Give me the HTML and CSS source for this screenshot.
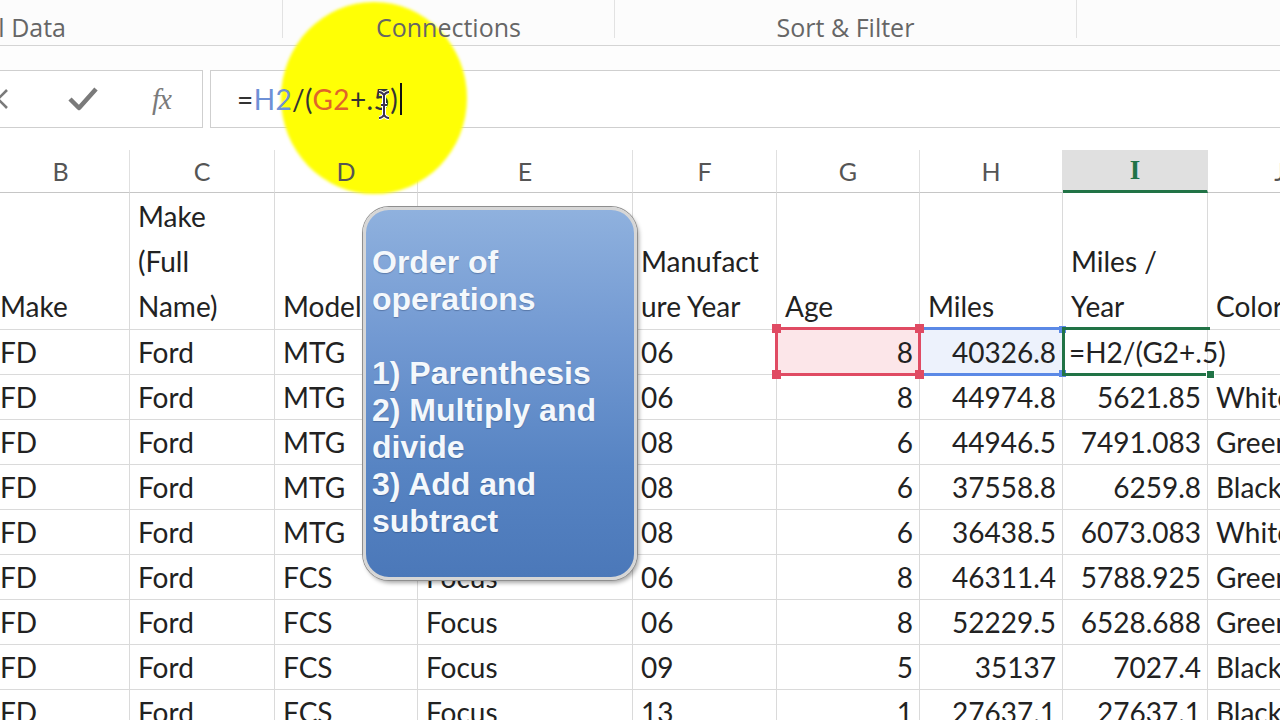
FILE: index.html
```html
<!DOCTYPE html>
<html>
<head>
<meta charset="utf-8">
<link rel="stylesheet" href="styles.css">
</head>
<body>
<div class="ribbon">
  <div class="rgroup g1"><span class="rlabel">Get External Data</span></div>
  <div class="rgroup g2"><span class="rlabel">Connections</span></div>
  <div class="rgroup g3"><span class="rlabel">Sort &amp; Filter</span></div>
  <div class="rgroup g4"></div>
</div>
<div class="band"></div>
<div class="fbar">
  <div class="fbtns">
    <div class="fbtn fbx">
      <svg width="24" height="24" viewBox="0 0 24 24"><path d="M3 3 L21 21 M21 3 L3 21" stroke="#7a7a7a" stroke-width="2.6" fill="none"/></svg>
    </div>
    <div class="fbtn">
      <svg width="32" height="28" viewBox="0 0 32 28"><path d="M3 14 L12 23 L29 4" stroke="#7a7a7a" stroke-width="4.5" fill="none" stroke-linejoin="round"/></svg>
    </div>
    <div class="fbtn"><span class="fx">fx</span></div>
  </div>
  <div class="finput">
    <span class="ftext"><span class="op">=</span><span class="r1">H2</span><span class="op">/(</span><span class="r2">G2</span><span class="op">+.5)</span></span><span class="caret"></span>
  </div>
</div>
<div class="spacer"></div>

<div class="sheet">
  <div class="ch"><span class="cl">B</span></div>
  <div class="ch"><span class="cl">C</span></div>
  <div class="ch"><span class="cl">D</span></div>
  <div class="ch"><span class="cl">E</span></div>
  <div class="ch"><span class="cl">F</span></div>
  <div class="ch"><span class="cl">G</span></div>
  <div class="ch"><span class="cl">H</span></div>
  <div class="ch sel"><span class="cl">I</span></div>
  <div class="ch"><span class="cl">J</span></div>

  <div class="c h"><div>Make</div></div>
  <div class="c h"><div>Make<br>(Full<br>Name)</div></div>
  <div class="c h"><div>Model</div></div>
  <div class="c h"><div>Model<br>Name</div></div>
  <div class="c h"><div>Manufact<br>ure Year</div></div>
  <div class="c h"><div>Age</div></div>
  <div class="c h"><div>Miles</div></div>
  <div class="c h"><div>Miles /<br>Year</div></div>
  <div class="c h"><div>Color</div></div>

  <div class="c">FD</div><div class="c">Ford</div><div class="c">MTG</div><div class="c">Mustang</div><div class="c">06</div>
  <div class="c n refg">8<span class="hl-red"><i class="sq tl"></i><i class="sq tr"></i><i class="sq bl"></i><i class="sq br"></i></span></div>
  <div class="c n refh">40326.8<span class="hl-blue"><i class="bsq btr"></i><i class="bsq bbr"></i></span></div>
  <div class="c edit">=H2/(G2+.5)<span class="hl-green"><i class="gsq"></i></span></div>
  <div class="c"></div>

  <div class="c">FD</div><div class="c">Ford</div><div class="c">MTG</div><div class="c">Mustang</div><div class="c">06</div><div class="c n">8</div><div class="c n">44974.8</div><div class="c n">5621.85</div><div class="c">White</div>
  <div class="c">FD</div><div class="c">Ford</div><div class="c">MTG</div><div class="c">Mustang</div><div class="c">08</div><div class="c n">6</div><div class="c n">44946.5</div><div class="c n">7491.083</div><div class="c">Green</div>
  <div class="c">FD</div><div class="c">Ford</div><div class="c">MTG</div><div class="c">Mustang</div><div class="c">08</div><div class="c n">6</div><div class="c n">37558.8</div><div class="c n">6259.8</div><div class="c">Black</div>
  <div class="c">FD</div><div class="c">Ford</div><div class="c">MTG</div><div class="c">Mustang</div><div class="c">08</div><div class="c n">6</div><div class="c n">36438.5</div><div class="c n">6073.083</div><div class="c">White</div>
  <div class="c">FD</div><div class="c">Ford</div><div class="c">FCS</div><div class="c">Focus</div><div class="c">06</div><div class="c n">8</div><div class="c n">46311.4</div><div class="c n">5788.925</div><div class="c">Green</div>
  <div class="c">FD</div><div class="c">Ford</div><div class="c">FCS</div><div class="c">Focus</div><div class="c">06</div><div class="c n">8</div><div class="c n">52229.5</div><div class="c n">6528.688</div><div class="c">Green</div>
  <div class="c">FD</div><div class="c">Ford</div><div class="c">FCS</div><div class="c">Focus</div><div class="c">09</div><div class="c n">5</div><div class="c n">35137</div><div class="c n">7027.4</div><div class="c">Black</div>
  <div class="c">FD</div><div class="c">Ford</div><div class="c">FCS</div><div class="c">Focus</div><div class="c">13</div><div class="c n">1</div><div class="c n">27637.1</div><div class="c n">27637.1</div><div class="c">Black</div>
</div>

<div class="spot"></div>

<svg class="ibeam" width="16" height="32" viewBox="0 0 16 32">
  <path d="M3 3 Q6 3 8 6 Q10 3 13 3 M8 6 V26 M3 29 Q6 29 8 26 Q10 29 13 29 M5 16 H11" stroke="#fff" stroke-width="4" fill="none"/>
  <path d="M3 3 Q6 3 8 6 Q10 3 13 3 M8 6 V26 M3 29 Q6 29 8 26 Q10 29 13 29 M5 16 H11" stroke="#3b3450" stroke-width="2" fill="none"/>
</svg>

<div class="callout">
  <p>Order of<br>operations<br><br>1) Parenthesis<br>2) Multiply and<br>divide<br>3) Add and<br>subtract</p>
</div>
</body>
</html>
```
FILE: styles.css
```css
* { box-sizing: border-box; }
html, body { margin: 0; padding: 0; }
body {
  width: 1280px;
  height: 720px;
  overflow: hidden;
  position: relative;
  background: #ffffff;
  font-family: Lato, "Open Sans", sans-serif;
}

/* ribbon */
.ribbon {
  height: 46px;
  display: flex;
  align-items: flex-start;
  background: #fcfcfc;
  border-bottom: 1px solid #d4d4d4;
}
.rgroup {
  height: 38px;
  display: flex;
  justify-content: center;
  padding-top: 9px;
  line-height: 36px;
  border-right: 1px solid #e2e2e2;
  font-family: "Open Sans", sans-serif;
  font-size: 25px;
  color: #666;
  white-space: nowrap;
}
.g1 { width: 283px; justify-content: flex-end; padding-right: 216px; }
.g2 { width: 332px; }
.g3 { width: 462px; }
.g4 { flex: 1; border-right: none; }
.rlabel { position: relative; z-index: 2; display: block; height: 0; }

.band { height: 24px; background: #fdfdfd; }

/* formula bar */
.fbar { display: flex; height: 58px; }
.fbtns {
  margin-left: -37px;
  width: 240px;
  flex: none;
  border: 1px solid #cfcfcf;
  display: flex;
  background: #fff;
}
.fbtn { width: 79px; display: flex; align-items: center; justify-content: center; }
.fbx { padding-right: 12px; }
.fx {
  font-family: "Liberation Serif", serif;
  font-style: italic;
  font-size: 29px;
  color: #7a7a7a;
  letter-spacing: -1px;
}
.finput {
  margin-left: 7px;
  flex: 1;
  border: 1px solid #cfcfcf;
  border-right: none;
  padding-left: 26px;
  display: flex;
  align-items: center;
  font-size: 28px;
  letter-spacing: 0.4px;
  color: #333;
  background: #fff;
}
.ftext { position: relative; z-index: 2; }
.op { color: #333; }
.r1 { color: #6e90d6; }
.r2 { color: #e0642a; }
.caret {
  position: relative;
  z-index: 2;
  display: inline-block;
  width: 2px;
  height: 32px;
  background: #111;
  margin-left: 2px;
}

.spacer { height: 22px; }

/* sheet */
.sheet {
  display: grid;
  grid-template-columns: 138px 145px 143px 215px 144px 143px 143px 145px 144px;
  grid-template-rows: 43px 137px repeat(9, 45px);
  margin-left: -8px;
}
.ch {
  display: flex;
  align-items: center;
  justify-content: center;
  border-right: 1px solid #e0e0e0;
  border-bottom: 1px solid #c6c6c6;
  font-size: 25px;
  color: #555;
}
.cl { position: relative; z-index: 2; }
.ch.sel {
  background: #e0e0e0;
  border-bottom: 3px solid #217346;
  color: #217346;
  font-weight: 700;
  font-family: "Liberation Serif", serif;
  font-size: 27px;
}
.c {
  position: relative;
  border-right: 1px solid #dadada;
  border-bottom: 1px solid #dadada;
  padding: 0 6px 0 8px;
  line-height: 44px;
  font-size: 28px;
  color: #222;
  white-space: nowrap;
  overflow: hidden;
}
.c.h {
  display: flex;
  align-items: flex-end;
  line-height: 45px;
}
.c.n { text-align: right; }
.c.edit { overflow: visible; z-index: 1; padding-left: 6px; }

.refg { background: #fce6e9; overflow: visible; z-index: 2; }
.refh { background: #edf2fc; overflow: visible; z-index: 1; }

.hl-red {
  position: absolute;
  top: -3px; left: -2px; right: -2px; bottom: -2px;
  border: 3px solid #e04b63;
}
.sq {
  position: absolute;
  width: 9px; height: 9px;
  background: #e04b63;
}
.tl { top: -6px; left: -6px; }
.tr { top: -6px; right: -6px; }
.bl { bottom: -6px; left: -6px; }
.br { bottom: -6px; right: -6px; }

.hl-blue {
  position: absolute;
  top: -3px; left: 0; right: -1px; bottom: -2px;
  border-top: 3px solid #5b89e6;
  border-bottom: 3px solid #5b89e6;
}
.bsq {
  position: absolute;
  width: 7px; height: 7px;
  background: #5b89e6;
  right: -3px;
}
.btr { top: -4px; }
.bbr { bottom: -4px; }

.hl-green {
  position: absolute;
  top: -3px; left: -1px; right: -3px; bottom: -2px;
  border-top: 3px solid #217346;
  border-bottom: 3px solid #217346;
  border-left: 3px solid #217346;
}
.gsq {
  position: absolute;
  width: 9px; height: 9px;
  background: #217346;
  border: 1px solid #fff;
  right: -5px;
  bottom: -6px;
}

/* yellow cursor spotlight */
.spot {
  position: absolute;
  left: 281px;
  top: 2px;
  width: 186px;
  height: 192px;
  border-radius: 50%;
  background: #ffff05;
  filter: blur(1.5px);
  z-index: 1;
}

.ibeam {
  position: absolute;
  left: 376px;
  top: 89px;
  z-index: 3;
}

/* callout */
.callout {
  position: absolute;
  left: 363px;
  top: 207px;
  width: 274px;
  height: 373px;
  z-index: 4;
  border-radius: 26px;
  border: 3px solid #d6d6d6;
  box-shadow: 0 0 0 1px #8f8f8f, 2px 3px 4px rgba(0, 0, 0, 0.35);
  background: linear-gradient(to bottom, #8fb1de 0%, #7299d2 35%, #5784c3 70%, #4b78b9 100%);
  padding: 34px 0 0 6px;
}
.callout p {
  margin: 0;
  font-family: "Liberation Sans", Arial, sans-serif;
  font-weight: 700;
  font-size: 32px;
  line-height: 37px;
  color: #f4f8fc;
  white-space: nowrap;
  text-shadow: 0 1px 1px rgba(30, 50, 90, 0.35);
}
```
